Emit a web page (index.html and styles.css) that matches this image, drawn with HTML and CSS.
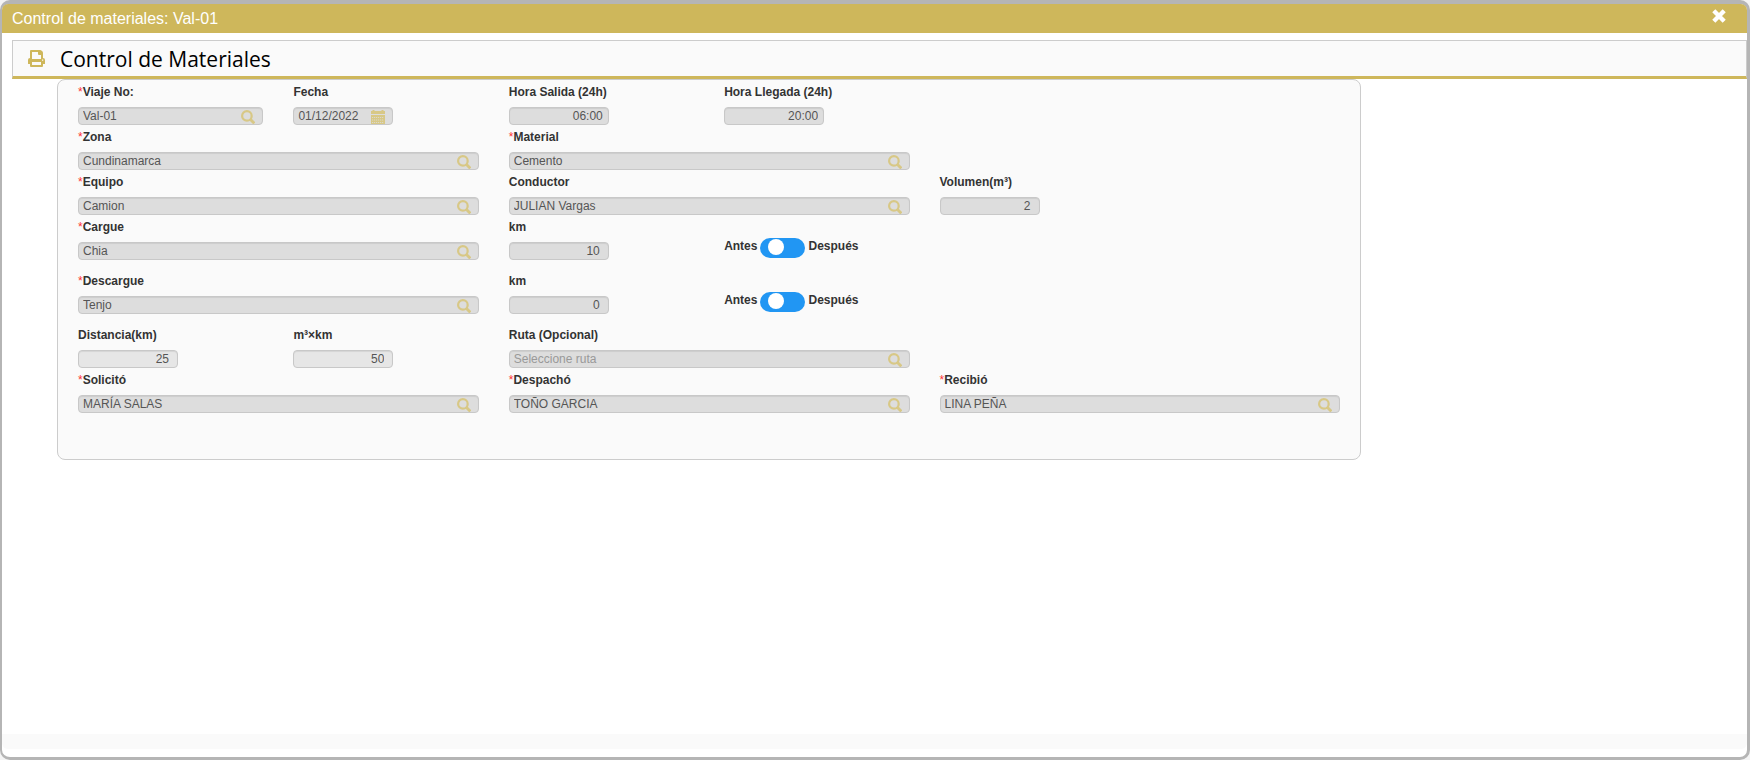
FILE: index.html
```html
<!DOCTYPE html>
<html lang="es">
<head>
<meta charset="utf-8">
<title>Control de materiales: Val-01</title>
<link rel="stylesheet" href="styles.css">
</head>
<body>
<svg class="sprite" aria-hidden="true">
  <symbol id="search" viewBox="0 0 14 14"><circle cx="5.900" cy="5.900" r="4.800" fill="none" stroke="currentColor" stroke-width="2.200"/><path d="M9 9l4.300 4.400" stroke="currentColor" stroke-width="2.800"/></symbol>
  <symbol id="calendar" viewBox="0 0 14 14"><path fill="currentColor" d="M0 1h1.500V0h2v1h7V0h2v1H14v3H0zM0 5h14v9H0z"/><path d="M1 7.500h12M1 10h12M1 12.500h12" stroke="#ddd" stroke-width=".8" stroke-dasharray="1.200 .8" fill="none"/></symbol>
</svg>
<main class="window">
  <header class="titlebar">
    <span>Control de materiales: Val-01</span>
    <button class="close" type="button" aria-label="Cerrar"><svg viewBox="0 0 14 14"><path d="M1.800 1.800l10.400 10.400M12.200 1.800l-10.400 10.400" stroke="currentColor" stroke-width="4.400"/></svg></button>
  </header>
  <div class="content">
    <div class="toolbar">
      <button class="print" type="button" aria-label="Imprimir"><svg viewBox="0 0 17 17"><path fill="currentColor" fill-rule="evenodd" d="M2 1q0-1 1-1h9q1 0 1.700.7l.6.6q.7.700.7 1.700v5q2 .2 2 2v3.500q0 .5-.5.5H15v2q0 1-1 1H3q-1 0-1-1v-2H.500q-.5 0-.5-.5V10q0-1.800 2-2zM4 2v7h9V5h-2q-1 0-1-1V2zM4 12v3h9v-3zM14 9.500v1.200h1.200V9.500z"/></svg></button>
      <h1>Control de Materiales</h1>
    </div>
    <form class="panel">
      <div class="row">
        <div class="field"><label for="viaje"><i>*</i>Viaje No:</label><div class="control"><input id="viaje" type="text" value="Val-01" disabled><button class="lookup" type="button" aria-label="Buscar viaje" disabled><svg><use href="#search"/></svg></button></div></div>
        <div class="field"><label for="fecha">Fecha</label><div class="control short"><input id="fecha" type="text" value="01/12/2022" disabled><button class="lookup" type="button" aria-label="Elegir fecha" disabled><svg><use href="#calendar"/></svg></button></div></div>
        <div class="field"><label for="salida">Hora Salida (24h)</label><div class="control short"><input id="salida" class="time" type="text" value="06:00" disabled></div></div>
        <div class="field"><label for="llegada">Hora Llegada (24h)</label><div class="control short"><input id="llegada" class="time" type="text" value="20:00" disabled></div></div>
      </div>
      <div class="row">
        <div class="field wide"><label for="zona"><i>*</i>Zona</label><div class="control"><input id="zona" type="text" value="Cundinamarca" disabled><button class="lookup" type="button" aria-label="Buscar zona" disabled><svg><use href="#search"/></svg></button></div></div>
        <div class="field wide"><label for="material"><i>*</i>Material</label><div class="control"><input id="material" type="text" value="Cemento" disabled><button class="lookup" type="button" aria-label="Buscar material" disabled><svg><use href="#search"/></svg></button></div></div>
      </div>
      <div class="row">
        <div class="field wide"><label for="equipo"><i>*</i>Equipo</label><div class="control"><input id="equipo" type="text" value="Camion" disabled><button class="lookup" type="button" aria-label="Buscar equipo" disabled><svg><use href="#search"/></svg></button></div></div>
        <div class="field wide"><label for="conductor">Conductor</label><div class="control"><input id="conductor" type="text" value="JULIAN Vargas" disabled><button class="lookup" type="button" aria-label="Buscar conductor" disabled><svg><use href="#search"/></svg></button></div></div>
        <div class="field"><label for="volumen">Volumen(m³)</label><div class="control short"><input id="volumen" class="number" type="text" value="2" disabled></div></div>
      </div>
      <div class="row spaced">
        <div class="field wide"><label for="cargue"><i>*</i>Cargue</label><div class="control"><input id="cargue" type="text" value="Chia" disabled><button class="lookup" type="button" aria-label="Buscar cargue" disabled><svg><use href="#search"/></svg></button></div></div>
        <div class="field"><label for="kmcargue">km</label><div class="control short"><input id="kmcargue" class="number" type="text" value="10" disabled></div></div>
        <div class="toggle"><label for="ladocargue">Antes</label><input id="ladocargue" type="checkbox" role="switch"><label for="ladocargue">Después</label></div>
      </div>
      <div class="row spaced">
        <div class="field wide"><label for="descargue"><i>*</i>Descargue</label><div class="control"><input id="descargue" type="text" value="Tenjo" disabled><button class="lookup" type="button" aria-label="Buscar descargue" disabled><svg><use href="#search"/></svg></button></div></div>
        <div class="field"><label for="kmdescargue">km</label><div class="control short"><input id="kmdescargue" class="number" type="text" value="0" disabled></div></div>
        <div class="toggle"><label for="ladodescargue">Antes</label><input id="ladodescargue" type="checkbox" role="switch"><label for="ladodescargue">Después</label></div>
      </div>
      <div class="row">
        <div class="field"><label for="distancia">Distancia(km)</label><div class="control short"><input id="distancia" class="number computed" type="text" value="25" readonly></div></div>
        <div class="field"><label for="m3km">m³×km</label><div class="control short"><input id="m3km" class="number computed" type="text" value="50" readonly></div></div>
        <div class="field wide"><label for="ruta">Ruta (Opcional)</label><div class="control"><input id="ruta" type="text" placeholder="Seleccione ruta" disabled><button class="lookup" type="button" aria-label="Buscar ruta" disabled><svg><use href="#search"/></svg></button></div></div>
      </div>
      <div class="row">
        <div class="field wide"><label for="solicito"><i>*</i>Solicitó</label><div class="control"><input id="solicito" type="text" value="MARÍA SALAS" disabled><button class="lookup" type="button" aria-label="Buscar solicitante" disabled><svg><use href="#search"/></svg></button></div></div>
        <div class="field wide"><label for="despacho"><i>*</i>Despachó</label><div class="control"><input id="despacho" type="text" value="TOÑO GARCIA" disabled><button class="lookup" type="button" aria-label="Buscar despachador" disabled><svg><use href="#search"/></svg></button></div></div>
        <div class="field wide"><label for="recibio"><i>*</i>Recibió</label><div class="control"><input id="recibio" type="text" value="LINA PEÑA" disabled><button class="lookup" type="button" aria-label="Buscar receptor" disabled><svg><use href="#search"/></svg></button></div></div>
      </div>
    </form>
  </div>
  <footer class="statusbar"></footer>
</main>
</body>
</html>
```
FILE: styles.css
```css
* { box-sizing: border-box; }
body {
  margin: 0;
  background: #f4f4f4;
  color: #333;
  font: 12px/20px "Liberation Sans", Arial, sans-serif;
}
button { padding: 0; border: 0; background: none; color: inherit; }
svg { display: block; width: 100%; height: 100%; }
.sprite { display: none; }

.window {
  display: flex;
  flex-direction: column;
  min-height: 100vh;
  padding-bottom: 8px;
  border: solid #b5b5b5;
  border-width: 4px 3px 3px 2px;
  border-radius: 10px;
  background: #fff;
}
.titlebar {
  display: flex;
  justify-content: space-between;
  height: 29px;
  padding: 0 21px 0 10px;
  border-radius: 6px 6px 0 0;
  background: #ceb75b;
  color: #fff;
  font-size: 16px;
  line-height: 29px;
}
.close { width: 14px; height: 14px; margin-top: 5px; }

.content { flex: 1; padding: 7px 0 0 10px; }
.toolbar {
  display: flex;
  align-items: center;
  gap: 15px;
  height: 39px;
  padding-left: 15px;
  border: 1px solid #ccc;
  border-bottom: 3px solid #ceb75b;
  background: #fafafa;
}
.print { width: 17px; height: 17px; color: #ceb75b; }
.toolbar h1 {
  margin: 0;
  color: #000;
  font: 400 21px/30px "Open Sans", "Noto Sans", sans-serif;
}

.panel {
  width: calc(75% + 3px);
  margin-left: 45px;
  padding: 2px 20px 44px;
  border: 1px solid #ccc;
  border-radius: 8px;
  background: #fafafa;
}
.row {
  display: grid;
  grid-template-columns: repeat(6, 1fr);
  column-gap: 30px;
  margin-bottom: 2px;
}
.spaced { margin-bottom: 11px; }
.wide { grid-column: span 2; }
.field { display: flex; flex-direction: column; gap: 5px; }
label { font-weight: bold; white-space: nowrap; }
label i { color: #f33; font-style: normal; font-weight: normal; }

.control { position: relative; }
.short { width: 100px; }
.control input {
  display: block;
  width: 100%;
  height: 18px;
  padding: 0 4px;
  border: 1px solid #c8c8c8;
  border-radius: 4px;
  background: #ddd;
  box-shadow: inset 0 1px 1px rgba(0, 0, 0, .075);
  color: #555;
  font: inherit;
}
.control input::placeholder { color: #999; }
.control .time { padding-right: 5px; text-align: right; }
.control .number { padding-right: 8px; text-align: right; }
.control .computed { background: #e6e6e6; }
.lookup {
  position: absolute;
  top: 3px;
  right: 8px;
  width: 14px;
  height: 14px;
  color: #d8c886;
}

.toggle {
  display: flex;
  align-items: flex-start;
  gap: 3px;
  padding-top: 19px;
}
.toggle input {
  flex: none;
  width: 45px;
  height: 20px;
  margin: 2px 0 0;
  padding: 1px 8px;
  border-radius: 10px;
  background: #2196f3;
  appearance: none;
}
.toggle input::before {
  content: "";
  display: block;
  width: 16px;
  height: 16px;
  border-radius: 50%;
  background: #fff;
}
.toggle input:checked::before { margin-left: auto; }

.statusbar { height: 15px; border-radius: 0 0 6px 6px; background: #fafafa; }
```
